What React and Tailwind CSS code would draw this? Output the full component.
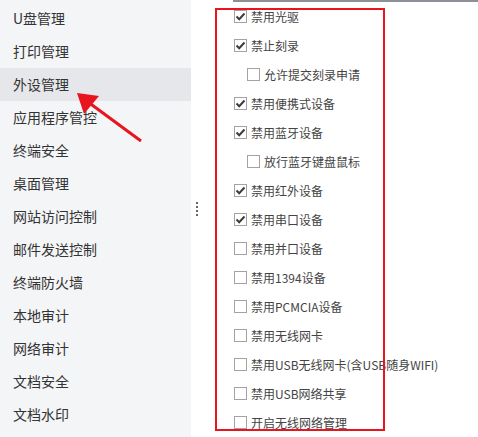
import React from "react";

const menu = [
  "U盘管理",
  "打印管理",
  "外设管理",
  "应用程序管控",
  "终端安全",
  "桌面管理",
  "网站访问控制",
  "邮件发送控制",
  "终端防火墙",
  "本地审计",
  "网络审计",
  "文档安全",
  "文档水印",
];

const options = [
  { label: "禁用光驱", checked: true },
  { label: "禁止刻录", checked: true },
  { label: "允许提交刻录申请", checked: false, sub: true },
  { label: "禁用便携式设备", checked: true },
  { label: "禁用蓝牙设备", checked: true },
  { label: "放行蓝牙键盘鼠标", checked: false, sub: true },
  { label: "禁用红外设备", checked: true },
  { label: "禁用串口设备", checked: true },
  { label: "禁用并口设备", checked: false },
  { label: "禁用1394设备", checked: false },
  { label: "禁用PCMCIA设备", checked: false },
  { label: "禁用无线网卡", checked: false },
  { label: "禁用USB无线网卡(含USB随身WIFI)", checked: false },
  { label: "禁用USB网络共享", checked: false },
  { label: "开启无线网络管理", checked: false },
];

const Box = ({ checked }) => (
  <span className="w-[13px] h-[13px] shrink-0 border border-[#a3a3a3] bg-white flex items-center justify-center">
    {checked && (
      <svg width="11" height="11" viewBox="0 0 11 11">
        <path d="M1.5 5.5 L4.2 8.2 L9.5 2.5" fill="none" stroke="#3c3c3c" strokeWidth="2" />
      </svg>
    )}
  </span>
);

const App = () => {
  return (
    <div
      className="relative w-[478px] h-[437px] overflow-hidden flex bg-white text-[#333]"
      style={{ fontFamily: '"Noto Sans CJK SC", "Noto Sans", sans-serif' }}
    >
      {/* Sidebar */}
      <aside className="w-[191px] shrink-0 bg-[#f4f5f7] pt-[2px]">
        {menu.map((m) => (
          <div
            key={m}
            className={`h-[33px] pl-[13px] flex items-center text-[14px] ${
              m === "外设管理" ? "bg-[#e5e7ea]" : ""
            }`}
          >
            {m}
          </div>
        ))}
      </aside>

      {/* Main */}
      <main className="relative flex-1">
        <div className="ml-[42px] h-[2px] bg-[#8c9096]" />
        <div className="flex flex-col pl-[43px]">
          {options.map((o) => (
            <div
              key={o.label}
              className={`h-[29px] flex items-center gap-[4px] text-[12px] text-[#444] whitespace-nowrap ${
                o.sub ? "ml-[13px]" : ""
              }`}
            >
              <Box checked={o.checked} />
              <span>{o.label}</span>
            </div>
          ))}
        </div>
        {/* drag handle */}
        <div className="absolute left-[5px] top-[202px] flex flex-col gap-[2px]">
          <span className="w-[2px] h-[2px] bg-[#666]" />
          <span className="w-[2px] h-[2px] bg-[#666]" />
          <span className="w-[2px] h-[2px] bg-[#666]" />
          <span className="w-[2px] h-[2px] bg-[#666]" />
        </div>
        {/* annotation box */}
        <div className="absolute left-[24px] top-[8px] w-[170px] h-[423px] border-2 border-[#e8141e] pointer-events-none" />
      </main>

      {/* annotation arrow */}
      <svg className="absolute left-0 top-0 pointer-events-none" width="478" height="437">
        <line x1="141" y1="141" x2="88" y2="102" stroke="#e8141e" strokeWidth="3" />
        <polygon points="77,93 99,96 84,114" fill="#e8141e" />
      </svg>
    </div>
  );
};

export default App;
